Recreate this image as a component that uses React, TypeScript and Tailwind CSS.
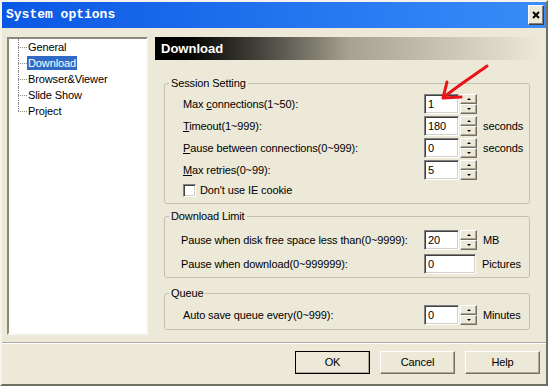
import * as React from 'react';

const treeItems = ['General', 'Download', 'Browser&Viewer', 'Slide Show', 'Project'];

const SpinButton: React.FC<{ up?: boolean }> = ({ up }) => (
    <div className="flex flex-1 items-center justify-center bg-[#ece9d8] border border-t-white border-l-white border-r-[#716f64] border-b-[#716f64] shadow-[inset_-1px_-1px_0_#aca899]">
        {up ? (
            <span className="w-0 h-0 border-x-[2px] border-x-transparent border-b-[2px] border-b-black" />
        ) : (
            <span className="w-0 h-0 border-x-[2px] border-x-transparent border-t-[2px] border-t-black" />
        )}
    </div>
);

const Spinner = () => (
    <div className="ml-px flex h-5 w-[17px] flex-col">
        <SpinButton up />
        <SpinButton />
    </div>
);

const TextBox: React.FC<{ value: string; wide?: boolean }> = ({ value, wide }) => (
    <div
        className={
            (wide ? 'w-[52px] ' : 'w-[35px] ') +
            'flex h-5 items-center bg-white pl-[3px] border border-t-[#808080] border-l-[#808080] border-b-white border-r-white shadow-[inset_1px_1px_0_#404040,inset_-1px_-1px_0_#d4d0c8]'
        }
    >
        {value}
    </div>
);

interface RowProps {
    label: React.ReactNode;
    value: string;
    unit?: string;
    spin?: boolean;
    indent?: 'wide' | 'narrow';
}

const Row: React.FC<RowProps> = ({ label, value, unit, spin = true, indent = 'wide' }) => (
    <div className={(indent === 'wide' ? 'pl-[18px] ' : 'pl-[16px] ') + 'flex h-5 items-center'}>
        <div className={indent === 'wide' ? 'w-[241px]' : 'w-[243px]'}>{label}</div>
        <TextBox value={value} wide={!spin} />
        {spin && <Spinner />}
        {unit && <span className="ml-[6px]">{unit}</span>}
    </div>
);

const Group: React.FC<{ title: string; className: string; children: React.ReactNode }> = ({ title, className, children }) => (
    <fieldset className={'ml-[9px] w-[366px] rounded-[3px] border border-[#c3c0b0] ' + className}>
        <legend className="ml-[4px] px-[2px] leading-[13px]">{title}</legend>
        {children}
    </fieldset>
);

const Button: React.FC<{ label: string; primary?: boolean }> = ({ label, primary }) => (
    <div
        className={
            (primary ? 'outline outline-1 outline-black -outline-offset-1 ' : '') +
            'flex h-[23px] w-[75px] items-center justify-center bg-[#ece9d8] border border-t-white border-l-white border-r-[#716f64] border-b-[#716f64] shadow-[inset_-1px_-1px_0_#aca899]'
        }
    >
        {label}
    </div>
);

export default function App() {
    return (
        <div className="relative flex h-[386px] w-[548px] flex-col overflow-hidden bg-[#ece9d8] border-2 border-t-[#f4f3ee] border-l-[#f4f3ee] border-r-[#716f64] border-b-[#716f64] font-['Liberation_Sans',Arial,sans-serif] text-[11px] tracking-[-0.12px] text-black">
            {/* title bar */}
            <div className="flex h-[26px] shrink-0 items-center bg-linear-to-r from-[#0a57e4] to-[#3a8cf8] pl-[4px] pr-[2px] tracking-normal">
                <span className="font-['Liberation_Mono','DejaVu_Sans_Mono',monospace] text-[13px] font-bold text-white">System options</span>
                <div className="ml-auto flex h-[20px] w-[16px] items-center justify-center bg-[#ece9d8] border border-t-white border-l-white border-r-[#404040] border-b-[#404040] shadow-[inset_-1px_-1px_0_#808080]">
                    <svg width="8" height="8" viewBox="0 0 8 8">
                        <path d="M1 1L7 7M7 1L1 7" stroke="#000" strokeWidth="2" />
                    </svg>
                </div>
            </div>

            <div className="flex h-[314px] shrink-0 pl-[5px] pt-[9px]">
                {/* tree */}
                <div className="h-[298px] w-[141px] bg-white border-2 border-t-[#8a887c] border-l-[#8a887c] border-b-[#f8f7f2] border-r-[#f8f7f2]">
                    {treeItems.map((item, i) => (
                        <div key={item} className="relative flex h-4 items-center pl-[9px]">
                            <span
                                className={
                                    (i === treeItems.length - 1 ? 'h-1/2 ' : 'h-full ') +
                                    'absolute left-[9px] top-0 border-l border-dotted border-[#8c8c8c]'
                                }
                            />
                            <span className="w-[9px] border-t border-dotted border-[#8c8c8c]" />
                            <span className={(item === 'Download' ? 'bg-[#316ac5] text-white ' : '') + 'px-[1px] leading-[14px]'}>{item}</span>
                        </div>
                    ))}
                </div>

                {/* page */}
                <div className="ml-[7px] flex w-[386px] flex-col">
                    <div className="flex h-[23px] shrink-0 items-center bg-linear-to-r from-black via-[#a5a291] to-[#ece9d8] pl-[6px] text-[13px] font-bold tracking-normal text-white">
                        Download
                    </div>

                    <Group title="Session Setting" className="mt-[17px] pt-[4px] pb-[6px]">
                        <div className="flex flex-col gap-[2px]">
                            <Row label={<>Max <u>c</u>onnections(1~50):</>} value="1" />
                            <Row label={<><u>T</u>imeout(1~999):</>} value="180" unit="seconds" />
                            <Row label={<><u>P</u>ause between connections(0~999):</>} value="0" unit="seconds" />
                            <Row label={<><u>M</u>ax retries(0~99):</>} value="5" />
                        </div>
                        <div className="mt-[4px] flex h-[13px] items-center pl-[18px]">
                            <span className="h-[13px] w-[13px] bg-white border border-t-[#808080] border-l-[#808080] border-b-white border-r-white shadow-[inset_1px_1px_0_#404040,inset_-1px_-1px_0_#d4d0c8]" />
                            <span className="ml-[4px]">Don't use IE cookie</span>
                        </div>
                    </Group>

                    <Group title="Download Limit" className="mt-[6px] pt-[7px] pb-[3px]">
                        <div className="flex flex-col gap-[4px]">
                            <Row indent="narrow" label="Pause when disk free space less than(0~9999):" value="20" unit="MB" />
                            <Row indent="narrow" label="Pause when download(0~999999):" value="0" unit="Pictures" spin={false} />
                        </div>
                    </Group>

                    <Group title="Queue" className="mt-[9px] pt-[5px] pb-[4px]">
                        <Row label="Auto save queue every(0~999):" value="0" unit="Minutes" />
                    </Group>
                </div>
            </div>

            <div className="h-[2px] shrink-0 border-t border-t-[#aca899] border-b border-b-white" />

            <div className="flex justify-end gap-[10px] pr-[6px] pt-[7px]">
                <Button label="OK" primary />
                <Button label="Cancel" />
                <Button label="Help" />
            </div>

            {/* red annotation arrow */}
            <svg className="absolute left-[436px] top-[58px]" width="54" height="42" viewBox="0 0 54 42">
                <path d="M49 6C38 14 22 24 6 37" stroke="#e8141a" strokeWidth="3" fill="none" strokeLinecap="round" />
                <path d="M9 22L5 38L23 37" stroke="#e8141a" strokeWidth="3" fill="none" strokeLinecap="round" strokeLinejoin="round" />
            </svg>
        </div>
    );
}
